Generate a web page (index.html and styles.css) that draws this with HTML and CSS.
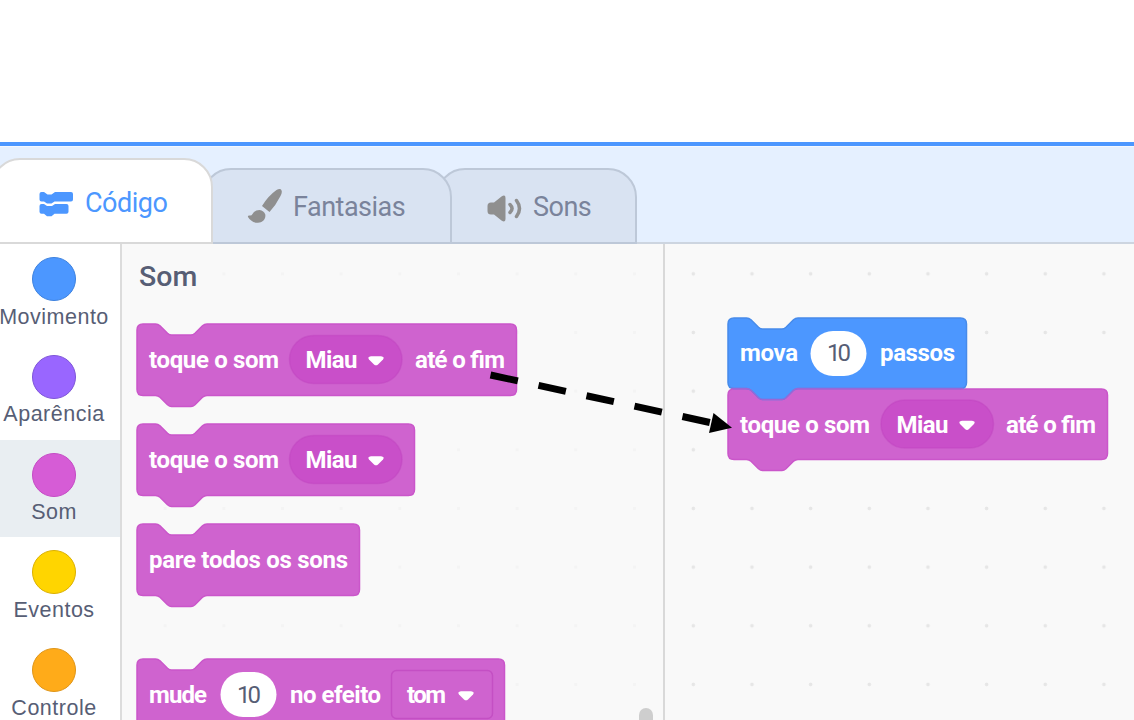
FILE: index.html
```html
<!DOCTYPE html>
<html lang="pt-BR">
<head>
<meta charset="utf-8">
<title>Editor de blocos</title>
<link rel="stylesheet" href="styles.css">
</head>
<body>
<svg class="defs" width="0" height="0">
  <defs>
    <path id="caret" d="M2.500 0H12.500Q16.500 .5 14.500 3.200L9.500 8.300Q7.500 10 5.500 8.300L.5 3.200Q-1.500 .5 2.500 0Z"/>
  </defs>
</svg>
<div class="screen">
  <header class="top-space"></header>
  <nav class="tabs">
    <div class="tab tab-active">
      <svg class="tab-icon code-icon" width="35" height="27" viewBox="0 0 35 27"><path d="M2.500 1H5L8.500 3.500H12.500L16 1H32Q34 1 34 3V8.500Q34 10.500 32 10.500H15.500L12.500 12.500H8L5 10.500H2.500Q.5 10.500 .5 8.500V3Q.5 1 2.500 1ZM2.500 13H5L8 15H13L16 13H27.500Q29.500 13 29.500 15V20.800Q29.500 22.800 27.500 22.800H15.500L12.500 25.300H8L5 22.800H2.500Q.5 22.800 .5 20.800V15Q.5 13 2.500 13Z"/></svg>
      <span>Código</span>
    </div>
    <div class="tab tab-costumes">
      <svg class="tab-icon" width="36" height="36" viewBox="0 0 36 36"><path d="M33.800 1.300Q36 3.500 33.500 8Q29 17 22.500 24L15 18Q21 8 29.500 2Q32.300.2 33.800 1.300ZM12.500 22Q17 22.500 18.300 26.500C19 31 15.500 34.500 11 34.700C6 35 3 32 1 29Q.5 27.300 2.500 27.500Q4.500 28 5.500 26Q7.500 22 12.500 22Z"/></svg>
      <span>Fantasias</span>
    </div>
    <div class="tab tab-sounds">
      <svg class="tab-icon sound-icon" width="36" height="28" viewBox="0 0 36 28"><path d="M4 7.500H7L14.500 1.500Q18.500-1 18.500 3V24Q18.500 28 14.500 25.500L7 19.500H4Q.5 19.500.5 16V11Q.5 7.500 4 7.500Z"/><path class="wave" d="M23 9.500Q27 13.500 23 17.500M29.500 5.500Q35.500 13.500 29.500 21.500"/></svg>
      <span>Sons</span>
    </div>
  </nav>
  <main class="editor">
    <aside class="categories">
      <div class="category"><i class="dot motion"></i><span>Movimento</span></div>
      <div class="category"><i class="dot looks"></i><span>Aparência</span></div>
      <div class="category selected"><i class="dot sound"></i><span>Som</span></div>
      <div class="category"><i class="dot events"></i><span>Eventos</span></div>
      <div class="category"><i class="dot control"></i><span>Controle</span></div>
    </aside>
    <section class="palette">
      <h2>Som</h2>
      <div class="blocks">
        <svg class="block purple" width="382" height="85">
          <path class="body" d="M1 7Q1 1 7 1H19.500Q22 1 24 2.800L31.500 10.300Q33.500 12 35.500 12H55Q57 12 59 10.300L66.500 2.800Q68.500 1 71 1H374.500Q380.500 1 380.500 7V66.500Q380.500 72.500 374.500 72.500H71Q68.500 72.500 66.500 74.300L59 81.800Q57 83.500 55 83.500H35.500Q33.500 83.500 31.500 81.800L24 74.300Q22 72.500 19.500 72.500H7Q1 72.500 1 66.500Z"/>
          <rect class="pill" x="153.500" y="12.500" width="112.500" height="48" rx="24"/>
          <text x="13" y="44.500" textLength="130">toque o som</text>
          <text x="169.500" y="44.500" textLength="52">Miau</text>
          <use class="caret" href="#caret" x="232.500" y="33.200"/>
          <text x="279" y="44.500" textLength="90">até o fim</text>
        </svg>
        <svg class="block purple" width="382" height="85">
          <path class="body" d="M1 7Q1 1 7 1H19.500Q22 1 24 2.800L31.500 10.300Q33.500 12 35.500 12H55Q57 12 59 10.300L66.500 2.800Q68.500 1 71 1H272.500Q278.500 1 278.500 7V66.500Q278.500 72.500 272.500 72.500H71Q68.500 72.500 66.500 74.300L59 81.800Q57 83.500 55 83.500H35.500Q33.500 83.500 31.500 81.800L24 74.300Q22 72.500 19.500 72.500H7Q1 72.500 1 66.500Z"/>
          <rect class="pill" x="153.500" y="12.500" width="112.500" height="48" rx="24"/>
          <text x="13" y="44.500" textLength="130">toque o som</text>
          <text x="169.500" y="44.500" textLength="52">Miau</text>
          <use class="caret" href="#caret" x="232.500" y="33.200"/>
        </svg>
        <svg class="block purple" width="382" height="85">
          <path class="body" d="M1 7Q1 1 7 1H19.500Q22 1 24 2.800L31.500 10.300Q33.500 12 35.500 12H55Q57 12 59 10.300L66.500 2.800Q68.500 1 71 1H217.500Q223.500 1 223.500 7V66.500Q223.500 72.500 217.500 72.500H71Q68.500 72.500 66.500 74.300L59 81.800Q57 83.500 55 83.500H35.500Q33.500 83.500 31.500 81.800L24 74.300Q22 72.500 19.500 72.500H7Q1 72.500 1 66.500Z"/>
          <text x="13" y="44.500" textLength="199">pare todos os sons</text>
        </svg>
        <svg class="block purple effect" width="382" height="85">
          <path class="body" d="M1 7Q1 1 7 1H19.500Q22 1 24 2.800L31.500 10.300Q33.500 12 35.500 12H55Q57 12 59 10.300L66.500 2.800Q68.500 1 71 1H362.500Q368.500 1 368.500 7V66.500Q368.500 72.500 362.500 72.500H71Q68.500 72.500 66.500 74.300L59 81.800Q57 83.500 55 83.500H35.500Q33.500 83.500 31.500 81.800L24 74.300Q22 72.500 19.500 72.500H7Q1 72.500 1 66.500Z"/>
          <rect class="input" x="84.500" y="14" width="56" height="45" rx="22.500"/>
          <rect class="menu" x="255.500" y="12.500" width="101" height="48" rx="5"/>
          <text x="13" y="44.500" textLength="58">mude</text>
          <text class="number" x="101" y="44.500" textLength="24">10</text>
          <text x="154" y="44.500" textLength="91">no efeito</text>
          <text x="271" y="44.500" textLength="39">tom</text>
          <use class="caret" href="#caret" x="322.500" y="33.200"/>
        </svg>
      </div>
      <div class="scroll-thumb"></div>
    </section>
    <section class="workspace">
      <svg class="block script" width="384" height="158">
        <g class="purple" transform="translate(0 71)">
          <path class="body" d="M1 7Q1 1 7 1H374.500Q380.500 1 380.500 7V65.500Q380.500 71.500 374.500 71.500H71Q68.500 71.500 66.500 73.300L59 80.800Q57 82.500 55 82.500H35.500Q33.500 82.500 31.500 80.800L24 73.300Q22 71.500 19.500 71.500H7Q1 71.500 1 65.500Z"/>
          <rect class="pill" x="154" y="12" width="112.500" height="48" rx="24"/>
          <text x="13" y="44.500" textLength="130">toque o som</text>
          <text x="169.500" y="44.500" textLength="52">Miau</text>
          <use class="caret" href="#caret" x="232.500" y="32.800"/>
          <text x="279" y="44.500" textLength="90">até o fim</text>
        </g>
        <g class="blue">
          <path class="body" d="M1 7Q1 1 7 1H19.500Q22 1 24 2.800L31.500 10.300Q33.500 12 35.500 12H55Q57 12 59 10.300L66.500 2.800Q68.500 1 71 1H233.500Q239.500 1 239.500 7V65.500Q239.500 71.500 233.500 71.500H71Q68.500 71.500 66.500 73.300L59 80.800Q57 82.500 55 82.500H35.500Q33.500 82.500 31.500 80.800L24 73.300Q22 71.500 19.500 71.500H7Q1 71.500 1 65.500Z"/>
          <path class="seam" d="M4 71.500H19.500Q22 71.500 24 73.300L31.500 80.800Q33.500 82.500 35.500 82.500H55Q57 82.500 59 80.800L66.500 73.300Q68.500 71.500 71 71.500H236"/>
          <rect class="input" x="83.500" y="14" width="56" height="45" rx="22.500"/>
          <text x="13" y="44" textLength="58">mova</text>
          <text class="number" x="100" y="44" textLength="24">10</text>
          <text x="153" y="44" textLength="75">passos</text>
        </g>
      </svg>
    </section>
  </main>
  <svg class="arrow" width="1134" height="720" viewBox="0 0 1134 720">
    <path class="shaft" d="M490.500 375L710 422.500"/>
    <path d="M713.500 413L732 427.700L709 433Z"/>
  </svg>
</div>
</body>
</html>
```
FILE: styles.css
```css
* { box-sizing: border-box; }
body { margin: 0; background: #fff; font-family: Roboto, "Liberation Sans", sans-serif; }
.defs { position: absolute; }
.screen { position: relative; width: 1134px; height: 720px; overflow: hidden; display: flex; flex-direction: column; }
.top-space { height: 146px; flex: none; border-bottom: 4px solid #4c97ff; }
.tabs { height: 98px; flex: none; display: flex; align-items: flex-end; background: #e5f0ff; border-top: 1px solid #f4f8ff; border-bottom: 2px solid #cdd5e0; }
.tab { position: relative; display: flex; align-items: center; height: 76px; margin-bottom: -2px; border: 2px solid #bdc8d8; border-radius: 29px 29px 0 0; background: #d9e3f2; color: #7a839b; font-size: 27px; letter-spacing: -.5px; white-space: nowrap; }
.tab span { margin-top: 2px; }
.tab-icon { flex: none; fill: #8f8f8f; }
.tab-active { z-index: 3; width: 222px; height: 86px; margin-left: -9px; padding: 3px 0 0 46px; gap: 11px; background: #fff; border-color: #d9d9d9; color: #4c97ff; }
.tab-active span { margin-top: 0; }
.tab-active .tab-icon { fill: #4c97ff; margin-top: 3px; }
.tab-costumes { z-index: 2; width: 250px; margin-left: -11px; padding-left: 43px; gap: 10px; }
.tab-sounds { z-index: 1; width: 201px; margin-left: -16px; padding-left: 49px; gap: 10px; }
.sound-icon { margin-top: 5px; }
.wave { fill: none; stroke: #8f8f8f; stroke-width: 3.500px; stroke-linecap: round; }
.editor { flex: 1; min-height: 0; display: flex; overflow: hidden; }
.categories { width: 122px; flex: none; border-right: 2px solid #dcdcdc; background: #fff; overflow: hidden; }
.category { width: 132px; height: 97.800px; margin-left: -12px; padding-top: 13px; display: flex; flex-direction: column; align-items: center; gap: 3.500px; font: 21.500px/25px "Liberation Sans", Arial, sans-serif; color: #575e75; letter-spacing: .5px; }
.selected { background: #e9eef2; }
.dot { width: 44px; height: 44px; border-radius: 50%; border: 1.500px solid; flex: none; }
.motion { background: #4c97ff; border-color: #3d82df; }
.looks { background: #9966ff; border-color: #7e55d8; }
.sound { background: #d65cd6; border-color: #c54bc5; }
.events { background: #ffd500; border-color: #dbb000; }
.control { background: #ffab19; border-color: #df9518; }
.palette { position: relative; width: 543px; flex: none; padding: 18px 0 0 14px; border-right: 2px solid #d9d9d9; background: radial-gradient(circle, #f4f4f4 1.500px, transparent 2px) 72.500px .5px / 58.670px 58.670px #f9f9f9; }
.palette h2 { margin: 0 0 31px 3px; font-size: 28.500px; line-height: 30px; font-weight: 500; color: #575e75; }
.blocks { display: flex; flex-direction: column; gap: 15px; }
.block { display: block; flex: none; font: 700 24px Roboto, sans-serif; }
.block text { fill: #fff; }
.block .number { fill: #575e75; font-weight: 400; }
.purple .body { fill: #cf63cf; stroke: #ca56ca; stroke-width: 1.500px; }
.purple .pill { fill: #c94fc9; stroke: #bd42bd; stroke-opacity: .4; stroke-width: 1.500px; }
.menu { fill: #cf63cf; stroke: #bd42bd; stroke-opacity: .6; stroke-width: 1.500px; }
.input, .block .caret { fill: #fff; }
.blue .body { fill: #4c97ff; stroke: #478bea; stroke-width: 1.500px; }
.seam { fill: none; stroke: #b45bcf; stroke-opacity: .75; stroke-width: 1.500px; }
.effect { margin-top: 35px; }
.scroll-thumb { position: absolute; right: 10px; top: 464px; width: 14px; height: 40px; border-radius: 7px; background: #cecece; }
.workspace { flex: 1; padding: 73px 0 0 62px; background: radial-gradient(circle, #e6e6e6 1.500px, transparent 2.200px) -1px .5px / 58.670px 58.670px #f9f9f9; }
.arrow { position: absolute; inset: 0; z-index: 10; pointer-events: none; }
.shaft { stroke: #000; stroke-width: 7px; stroke-dasharray: 28 21.100; }
```
